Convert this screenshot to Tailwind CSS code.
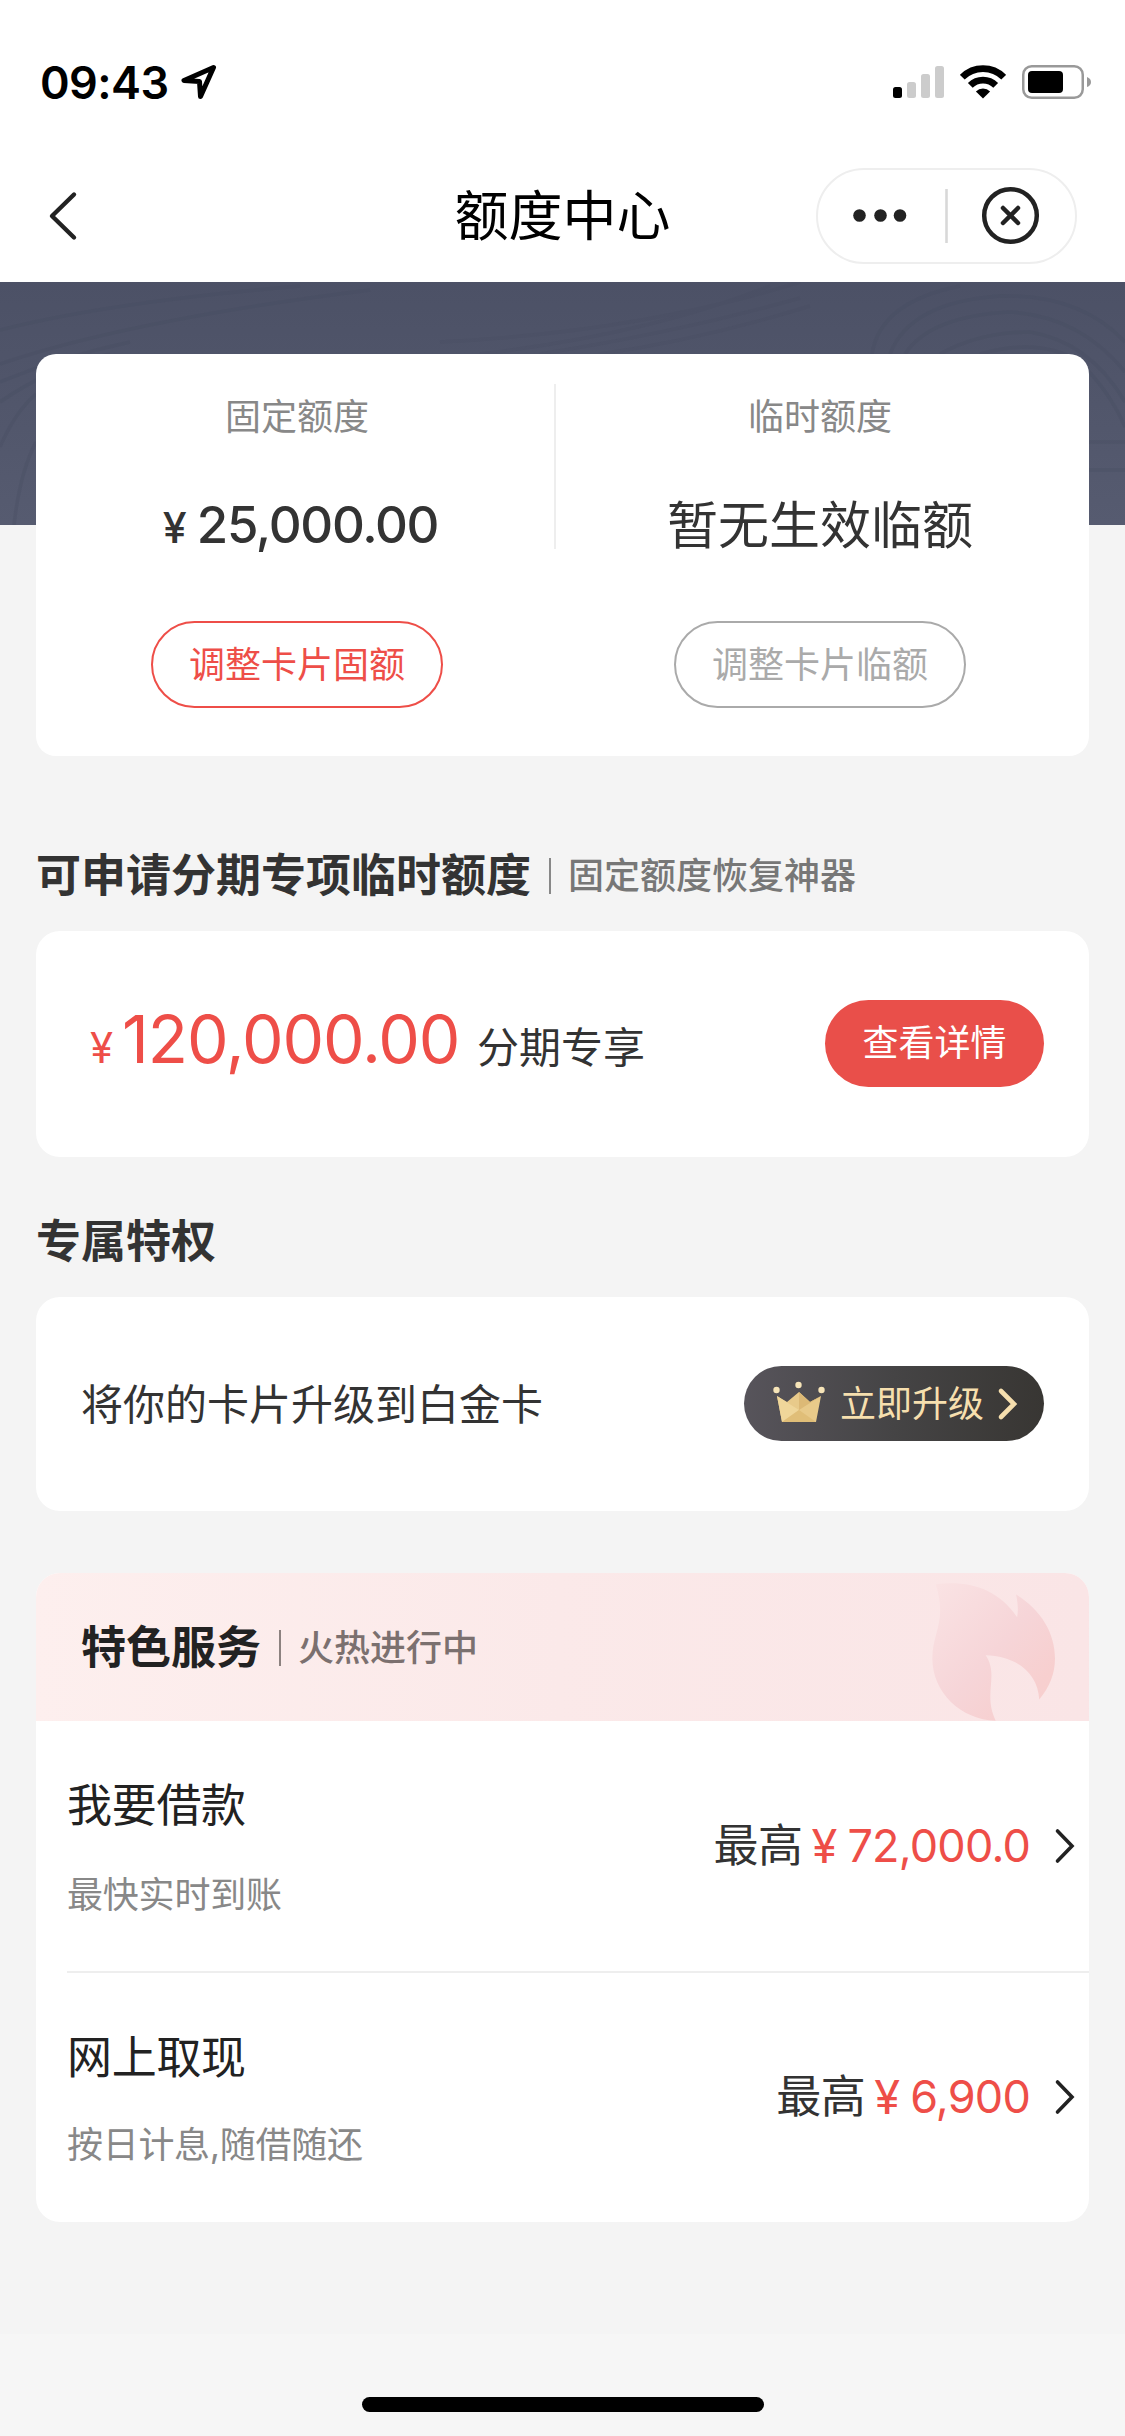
<!DOCTYPE html>
<html lang="zh-CN">
<head>
<meta charset="utf-8">
<title>额度中心</title>
<script src="https://cdn.jsdelivr.net/npm/@tailwindcss/browser@4"></script>
</head>
<body class="w-[1125px] h-[2436px] overflow-hidden bg-[#f4f4f4] font-['Inter','Noto_Sans_CJK_SC',sans-serif] text-[#333] whitespace-nowrap flex flex-col">

<!-- status bar -->
<header class="bg-white h-[282px] shrink-0">
  <div class="h-[132px] pt-[32px] pl-[40px] pr-[34px] flex items-center justify-between text-black">
    <div class="flex items-center">
      <span class="w-[141px] text-[45px] leading-[54px] mt-[1px] font-semibold tracking-[-0.6px]">09:43</span>
      <svg class="w-[36px] h-[36px]" viewBox="0 0 36 36" fill="none" stroke="#000" stroke-width="5" stroke-linejoin="round"><path d="M32.500 3.500 L3 16.500 L18.500 17.500 L19.500 32.500 Z"/></svg>
    </div>
    <div class="flex items-center">
      <svg class="w-[51px] h-[34px] mr-[16px]" viewBox="0 0 51 34"><rect x="0" y="22" width="9" height="11" rx="2.5"/><g fill="#ccc"><rect x="14" y="17" width="9" height="16" rx="2.5"/><rect x="28" y="9" width="9" height="24" rx="2.5"/><rect x="42" y="1" width="9" height="32" rx="2.5"/></g></svg>
      <svg class="w-[46px] h-[34px] mr-[16px]" viewBox="0 0 46 34"><g fill="none" stroke="#000" stroke-width="6.8"><path d="M2.3 12.2 A29.3 29.3 0 0 1 43.7 12.2"/><path d="M10.3 20.4 A18 18 0 0 1 35.7 20.4"/></g><path d="M15.9 26.4 A10 10 0 0 1 30.1 26.4 L23 33.5 Z"/></svg>
      <svg class="w-[69px] h-[34px]" viewBox="0 0 69 34"><rect x="1.25" y="1.25" width="59.5" height="31.5" rx="8.5" fill="none" stroke="#999" stroke-width="2.5"/><rect x="6" y="6" width="35" height="22" rx="4"/><path d="M65 12 Q69 13.5 69 17 Q69 20.500 65 22 Z" fill="#999"/></svg>
    </div>
  </div>
  <!-- navigation bar -->
  <div class="h-[150px] grid grid-cols-[1fr_auto_1fr] items-center px-[48px]">
    <svg class="w-[30px] h-[52px] mt-[17px]" viewBox="0 0 30 52" fill="none" stroke="#222" stroke-width="4.400" stroke-linecap="round" stroke-linejoin="round"><path d="M26 4.500 L4 26 L26 47.500"/></svg>
    <h1 class="text-[54px] leading-[80px] mt-[19px] text-black">额度中心</h1>
    <div class="justify-self-end mt-[17px] w-[261px] h-[96px] rounded-full border-2 border-[#eee]">
      <svg class="w-[257px] h-[92px]" viewBox="818 170 257 92"><g fill="#222"><circle cx="859.500" cy="215.500" r="6.300"/><circle cx="880.500" cy="215.500" r="6.300"/><circle cx="900" cy="215.500" r="6.300"/></g><path d="M946.500 189V243" stroke="#d8d8d8" stroke-width="2.600"/><g fill="none" stroke="#222"><circle cx="1010.500" cy="215.500" r="26.300" stroke-width="4.500"/><path d="M1003 208L1018 223M1018 208L1003 223" stroke-width="4.500" stroke-linecap="round"/></g></svg>
    </div>
  </div>
</header>

<main class="flex flex-col">
  <!-- limits -->
  <section class="relative h-[243px] px-[36px] pt-[72px] bg-linear-to-b from-[#4c5166] to-[#565b70]">
    <svg class="absolute inset-0 w-full h-full" viewBox="0 0 1125 243" fill="none" stroke="#464b60" stroke-opacity=".3" stroke-width="3.500">
      <path d="M0 48Q110 20 300 4M0 82Q130 38 370 8M0 100Q60 75 130 60M0 120Q50 85 110 72M0 165Q15 130 36 112M14 243Q20 190 36 160"/>
      <path d="M440 60Q640 50 800 0M480 72Q650 52 770 4M540 72Q680 50 800 16M600 72Q700 58 810 24" stroke-opacity=".2"/>
      <path d="M872 72Q880 20 960 4M890 72Q910 20 1000 14Q1080 12 1125 60M905 72Q930 34 1010 30Q1080 34 1125 90M940 72Q980 50 1030 50Q1090 60 1125 120M980 72Q1040 55 1080 80Q1110 110 1125 145M1089 160H1125M1089 188H1125"/>
    </svg>
    <div class="relative h-[402px] rounded-[20px] bg-white flex text-center">
      <div class="w-[522px] flex flex-col items-center">
        <div class="mt-[36px] text-[36px] leading-[54px] text-[#888]">固定额度</div>
        <div class="mt-[39px] h-[84px] pl-[7px] flex items-baseline font-medium leading-[84px]"><span class="text-[43px] w-[34px] text-left">¥</span><span class="text-[51px] tracking-[-1.3px]">25,000.00</span></div>
        <button class="mt-[54px] w-[292px] h-[87px] rounded-full border-2 border-[#ee4e48] text-[36px] leading-[82px] text-[#ee4e48]">调整卡片固额</button>
      </div>
      <div class="w-[2px] h-[165px] mt-[30px] -ml-[4px] mr-[2px] bg-[#eee]"></div>
      <div class="w-[524px] flex flex-col items-center">
        <div class="mt-[36px] text-[36px] leading-[54px] text-[#888]">临时额度</div>
        <div class="mt-[40px] h-[84px] text-[51px] leading-[84px]">暂无生效临额</div>
        <button class="mt-[53px] w-[292px] h-[87px] rounded-full border-2 border-[#aaa] text-[36px] leading-[82px] text-[#aaa]">调整卡片临额</button>
      </div>
    </div>
  </section>

  <!-- instalment limit -->
  <section class="px-[36px] mt-[319px]">
    <div class="h-[64px] flex items-center">
      <h2 class="text-[45px] leading-[64px] font-bold">可申请分期专项临时额度</h2>
      <i class="w-[2px] h-[36px] bg-[#888] ml-[18px] mr-[17px]"></i>
      <span class="text-[36px] leading-[64px] font-medium text-[#777]">固定额度恢复神器</span>
    </div>
    <div class="mt-[23px] h-[226px] rounded-[24px] bg-white flex items-center pl-[54px] pr-[45px]">
      <div class="flex items-baseline -mt-[2px] leading-[90px] text-[#ee4e48]"><span class="w-[32px] text-[42px]">¥</span><span class="w-[355px] text-[66px] tracking-[-1.1px]">120,000.00</span><span class="text-[42px] text-[#333]">分期专享</span></div>
      <button class="ml-auto w-[219px] h-[87px] -mt-[2px] rounded-full bg-[#e94f4a] text-white text-[36px] leading-[86px]">查看详情</button>
    </div>
  </section>

  <!-- privileges -->
  <section class="px-[36px] mt-[53px]">
    <h2 class="text-[45px] leading-[64px] font-bold">专属特权</h2>
    <div class="mt-[23px] h-[214px] rounded-[24px] bg-white flex items-center justify-between pl-[45px] pr-[45px]">
      <span class="text-[42px] leading-[60px] mt-[1px]">将你的卡片升级到白金卡</span>
      <button class="w-[300px] h-[75px] -mt-[1px] rounded-full bg-linear-to-r from-[#57545b] via-[#454445] to-[#383633] flex items-center pl-[28px]">
        <svg class="w-[54px] h-[44px] -mt-[3px]" viewBox="0 0 54 44">
          <path d="M5 16L15 22L27 12L38 22L49 16L44 42H10Z" fill="#e8ca8a"/><path d="M27 12L38 22L49 16L27 30Z" fill="#dcb976"/><path d="M5 16L27 30L10 42Z" fill="#efd69a"/><path d="M27 30L44 42H10Z" fill="#e0be78"/>
          <g fill="#f6e4b8"><circle cx="4.500" cy="10" r="3.200"/><circle cx="26.500" cy="5" r="3.200"/><circle cx="49.500" cy="10" r="3.200"/></g></svg>
        <span class="ml-[14px] text-[36px] leading-[72px] mt-[1px] text-[#f6dfae]">立即升级</span>
        <svg class="ml-[13px] w-[21px] h-[34px]" viewBox="0 0 21 34" fill="none" stroke="#f6dfae" stroke-width="4.600" stroke-linecap="round"><path d="M4 4L17 17L4 30"/></svg>
      </button>
    </div>
  </section>

  <!-- featured services -->
  <section class="mx-[36px] mt-[62px] h-[649px] rounded-[24px] bg-white overflow-hidden">
    <div class="relative h-[148px] flex items-center pl-[45px] pt-[1px] bg-linear-to-r from-[#fdefee] via-[#fbe9e9] to-[#fae5e6]">
      <h2 class="text-[45px] leading-[64px] font-bold text-[#222]">特色服务</h2>
      <i class="w-[2px] h-[36px] bg-[#8c8280] ml-[18px] mr-[17px]"></i>
      <span class="text-[36px] leading-[64px] font-medium text-[#7b706f]">火热进行中</span>
      <svg class="absolute left-[896px] top-[10px] w-[123px] h-[138px]" viewBox="994 100 367 411" preserveAspectRatio="none">
        <defs><linearGradient id="flame" x1="0" y1="0" x2="1" y2="1"><stop offset="0" stop-color="#fae3e4"/><stop offset=".5" stop-color="#f6d5d8"/><stop offset=".8" stop-color="#f7cfcf"/><stop offset="1" stop-color="#f8d0ce"/></linearGradient></defs>
        <path fill="url(#flame)" d="M1005 104C1100 92 1190 115 1248 202C1252 180 1250 160 1245 134C1320 180 1361 250 1361 325C1361 370 1345 410 1314 447C1310 370 1250 318 1154 315C1195 375 1145 430 1184 510C1080 508 995 425 995 325C995 245 1040 215 1005 104Z"/></svg>
    </div>
    <div class="h-[252px] ml-[31px] border-b-2 border-[#eee] flex items-center justify-between pr-[13px]">
      <div class="mt-[3px]">
        <div class="text-[45px] leading-[64px] tracking-[-0.3px] text-[#222]">我要借款</div>
        <div class="mt-[30px] text-[36px] leading-[54px] tracking-[-0.2px] text-[#888]">最快实时到账</div>
      </div>
      <div class="flex items-center text-[45px] leading-[64px]"><span class="tracking-[-0.5px]">最高</span><span class="ml-[9px] w-[36px] text-[47px] text-[#ee4e48]">¥</span><span class="text-[#ee4e48] tracking-[-0.8px]">72,000.0</span>
        <svg class="ml-[24px] w-[22px] h-[38px]" viewBox="0 0 22 38" fill="none" stroke="#222" stroke-width="3.600" stroke-linecap="round"><path d="M3.500 4L18 19L3.500 34"/></svg></div>
    </div>
    <div class="h-[249px] ml-[31px] flex items-center justify-between pr-[13px]">
      <div class="mt-[2px]">
        <div class="text-[45px] leading-[64px] tracking-[-0.3px] text-[#222]">网上取现</div>
        <div class="mt-[28px] text-[36px] leading-[54px] tracking-[-0.3px] text-[#888]">按日计息,随借随还</div>
      </div>
      <div class="flex items-center -mt-[2px] text-[45px] leading-[64px]"><span class="tracking-[-0.5px]">最高</span><span class="ml-[9px] w-[36px] text-[47px] text-[#ee4e48]">¥</span><span class="text-[#ee4e48] tracking-[-0.8px]">6,900</span>
        <svg class="ml-[24px] w-[22px] h-[38px]" viewBox="0 0 22 38" fill="none" stroke="#222" stroke-width="3.600" stroke-linecap="round"><path d="M3.500 4L18 19L3.500 34"/></svg></div>
    </div>
  </section>
</main>

<!-- home indicator -->
<footer class="mt-auto h-[102px] shrink-0 bg-[#f6f6f6] flex justify-center items-end pb-[24px]">
  <div class="w-[402px] h-[15px] rounded-full bg-black"></div>
</footer>
</body>
</html>
